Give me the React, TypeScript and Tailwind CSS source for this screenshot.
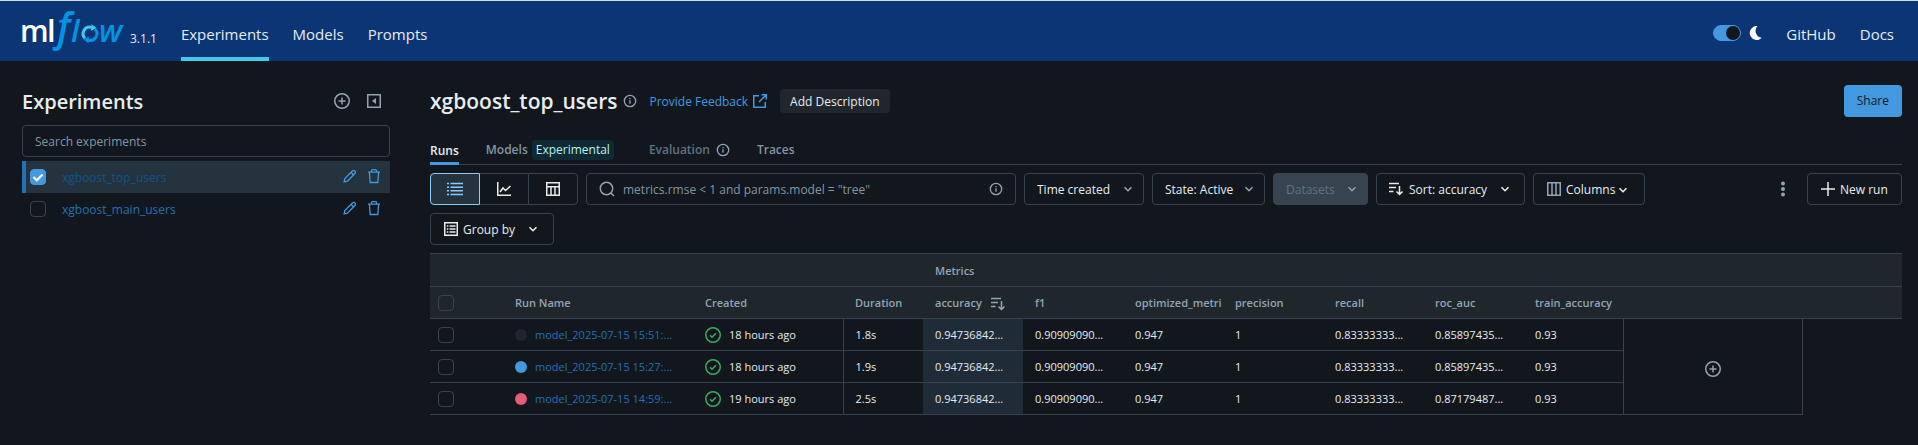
import type { ReactNode } from "react";

type IconProps = { className?: string };

function Logo() {
  return (
    <svg width="106" height="44" viewBox="0 0 106 44" role="img" aria-label="mlflow" className="shrink-0 overflow-visible">
      <g style={{ fontFamily: '"Open Sans", sans-serif' }} fontWeight="600">
        <text x="0" y="33" fontSize="30" fill="#fff">m</text>
        <text x="27" y="33" fontSize="31" fill="#fff">l</text>
        <text x="37" y="32" fontSize="39" fontStyle="italic" fill="#0194e2">f</text>
        <text x="51" y="33" fontSize="31" fontStyle="italic" fill="#0194e2">l</text>
        <text x="79" y="33" fontSize="31" fontStyle="italic" fill="#0194e2">w</text>
      </g>
      <g fill="none" strokeWidth="3">
        <path d="M65 29.200a6.500 6.500 0 0 1 6.500-10.800" stroke="#43c9ed" />
        <path d="M75 20.200a6.500 6.500 0 0 1-6.500 10.800" stroke="#0194e2" />
      </g>
      <path d="M71.500 15.200l5 3.800-5.600 3z" fill="#43c9ed" />
      <path d="M68.500 34.200l-5-3.800 5.600-3z" fill="#0194e2" />
    </svg>
  );
}

function Icon({ size = 16, className = "", children }: { size?: number; className?: string; children: ReactNode }) {
  return (
    <svg
      width={size}
      height={size}
      viewBox="0 0 16 16"
      fill="none"
      stroke="currentColor"
      strokeWidth="1.5"
      aria-hidden="true"
      className={`shrink-0 ${className}`}
    >
      {children}
    </svg>
  );
}

const PlusCircle = () => (
  <Icon>
    <circle cx="8" cy="8" r="7.25" />
    <path d="M8 4.5v7M4.5 8h7" />
  </Icon>
);

const CollapseIcon = () => (
  <Icon>
    <path d="M1.75 1.75h12.5v12.5H1.75z" />
    <path d="M10 5v6L6 8z" fill="currentColor" stroke="none" />
  </Icon>
);

const Pencil = () => (
  <Icon>
    <path d="M2.200 13.800l.6-3.200 7.600-7.600a1.700 1.700 0 0 1 2.500 2.500L5.400 13.100zM9 4.500l2.500 2.500" strokeWidth="1.3" />
  </Icon>
);

const Trash = () => (
  <Icon>
    <path d="M2 4.2h12M5.5 4V2.6c0-.6.4-1 1-1h3c.6 0 1 .4 1 1V4M3.4 4.5l.8 10h7.6l.8-10" strokeWidth="1.3" />
  </Icon>
);

const InfoIcon = () => (
  <Icon size={14}>
    <circle cx="8" cy="8" r="6.5" />
    <path d="M8 7v4.2M8 4.6v1.5" />
  </Icon>
);

const ExternalIcon = () => (
  <Icon>
    <path d="M7 2.75H1.75v11.5h11.5V9M9.5 1.75h4.75V6.5M14 2L7 9" />
  </Icon>
);

const ListIcon = () => (
  <Icon>
    <path d="M0 2.5h2M0 6.2h2M0 9.8h2M0 13.5h2M3.5 2.5H16M3.5 6.2H16M3.5 9.8H16M3.5 13.5H16" />
  </Icon>
);

const ChartIcon = () => (
  <Icon>
    <path d="M1.75 1v13.25H15M4 11l3-4 2.5 2.5L14.5 5" />
  </Icon>
);

const TableIcon = () => (
  <Icon>
    <path d="M1.75 1.75h12.5v12.5H1.75zM1.75 5.75h12.5M6 6v8M10 6v8" />
  </Icon>
);

const SearchIcon = () => (
  <Icon>
    <circle cx="7.5" cy="7.5" r="6.2" />
    <path d="M12 12l3 3" />
  </Icon>
);

const Chevron = ({ className = "" }: IconProps) => (
  <Icon className={className}>
    <path d="M4.5 6.2L8 9.7l3.500-3.500" strokeWidth="1.6" />
  </Icon>
);

const SortIcon = () => (
  <Icon>
    <path d="M1 2.5h10M1 6.500h7M1 10.5h4.500M11.500 5v8.500M8.500 10.500l3 3 3-3" />
  </Icon>
);

const ColumnsIcon = () => (
  <Icon className="text-[#92a4b3]">
    <path d="M1.75 1.75h12.5v12.5H1.75zM6 2v12M10 2v12" />
  </Icon>
);

const GroupIcon = () => (
  <Icon>
    <path d="M1.75 1.75h12.5v12.5H1.75z" />
    <path d="M3.800 5h1.500M3.800 8h1.500M3.800 11h1.500M6.500 5h6M6.500 8h6M6.500 11h6" />
  </Icon>
);

const CheckCircle = () => (
  <Icon className="text-[#3caa60]">
    <circle cx="8" cy="8" r="7.25" />
    <path d="M5 8.300l2 2 4-4" />
  </Icon>
);

function Checkbox({ label, checked = false }: { label: string; checked?: boolean }) {
  return (
    <span className="relative flex size-4 shrink-0">
      <input
        type="checkbox"
        aria-label={label}
        defaultChecked={checked}
        className="peer size-4 appearance-none rounded-[4px] border border-[#37444f] checked:border-[#4299e0] checked:bg-[#4299e0]"
      />
      <svg viewBox="0 0 16 16" aria-hidden="true" className="pointer-events-none absolute inset-0 hidden size-4 peer-checked:block">
        <path d="M3.500 8l3.300 3.300L12.500 5.500" fill="none" stroke="#fff" strokeWidth="2.200" />
      </svg>
    </span>
  );
}

function Experiment({ name, selected = false }: { name: string; selected?: boolean }) {
  return (
    <li
      className={`flex h-8 items-center border-l-4 pr-2 pl-1 ${
        selected ? "border-[#2272b4] bg-[#25333f]" : "border-transparent"
      }`}
    >
      <Checkbox label={name} checked={selected} />
      <a href="#" className={`ml-4 grow pt-0.5 text-xs ${selected ? "text-[#0e538b]" : "text-[#2272b4]"}`}>
        {name}
      </a>
      <span className="flex gap-2 pb-0.5 text-[#4299e0]">
        <button aria-label={`Rename ${name}`}><Pencil /></button>
        <button aria-label={`Delete ${name}`}><Trash /></button>
      </span>
    </li>
  );
}

function Dropdown({
  label,
  value,
  width,
  icon,
  tone = "text-[#e8ecf0]",
  chevron = "right-2 text-[#92a4b3]",
  disabled = false,
}: {
  label: string;
  value: string;
  width: string;
  icon?: ReactNode;
  tone?: string;
  chevron?: string;
  disabled?: boolean;
}) {
  return (
    <div className={`relative flex h-8 items-center ${width}`}>
      {icon && <span className="pointer-events-none absolute left-3">{icon}</span>}
      <select
        aria-label={label}
        disabled={disabled}
        className={`h-8 w-full appearance-none rounded-[4px] border border-[#37444f] pt-0.5 pr-7 text-xs opacity-100 ${
          icon ? "pl-8" : "pl-3"
        } ${disabled ? "bg-[#37444f]" : "bg-transparent"} ${tone}`}
      >
        <option>{value}</option>
      </select>
      <Chevron className={`pointer-events-none absolute ${chevron}`} />
    </div>
  );
}

const outlined = "flex h-8 items-center rounded-[4px] border border-[#37444f] text-xs";

const metrics = ["accuracy", "f1", "optimized_metri", "precision", "recall", "roc_auc", "train_accuracy"];

const runs = [
  {
    name: "model_2025-07-15 15:51:...",
    dot: "bg-[#1f272d]",
    created: "18 hours ago",
    duration: "1.8s",
    values: ["0.94736842...", "0.90909090...", "0.947", "1", "0.83333333...", "0.85897435...", "0.93"],
  },
  {
    name: "model_2025-07-15 15:27:...",
    dot: "bg-[#4299e0]",
    created: "18 hours ago",
    duration: "1.9s",
    values: ["0.94736842...", "0.90909090...", "0.947", "1", "0.83333333...", "0.85897435...", "0.93"],
  },
  {
    name: "model_2025-07-15 14:59:...",
    dot: "bg-[#e65b77]",
    created: "19 hours ago",
    duration: "2.5s",
    values: ["0.94736842...", "0.90909090...", "0.947", "1", "0.83333333...", "0.87179487...", "0.93"],
  },
];

function Header() {
  return (
    <header className="flex h-[61px] items-stretch border-t border-[#d5dde4] bg-[#0b3574] pr-6 pl-5 text-[15px] text-[#e8ecf0]">
      <div className="flex items-start gap-1 pt-2">
        <Logo />
        <span className="pt-5 text-xs leading-5">3.1.1</span>
      </div>
      <nav className="ml-6 flex gap-6">
        <a href="#" className="flex items-center border-b-4 border-[#43c9ed] pt-2.5">Experiments</a>
        <a href="#" className="flex items-center pt-1.5">Models</a>
        <a href="#" className="flex items-center pt-1.5">Prompts</a>
      </nav>
      <div className="ml-auto flex items-center gap-6 pt-1">
        <div className="flex items-center gap-2">
          <button role="switch" aria-checked="true" aria-label="Dark mode" className="flex h-4 w-7 justify-end rounded-full border border-[#4299e0] bg-[#4299e0]">
            <span className="size-[14px] rounded-full bg-[#11171c]" />
          </button>
          <svg width="13" height="14" viewBox="0 0 13 14" aria-hidden="true">
            <path d="M8.500 0A7 7 0 1 0 12.800 11.800 7 7 0 0 1 8.500 0z" fill="#fff" />
          </svg>
        </div>
        <a href="#" className="pt-0.5">GitHub</a>
        <a href="#" className="pt-0.5">Docs</a>
      </div>
    </header>
  );
}

function Sidebar() {
  return (
    <aside className="w-[390px] shrink-0 pt-6 pl-[22px]">
      <div className="flex h-8 items-center pr-2">
        <h2 className="grow pt-0.5 text-xl font-semibold">Experiments</h2>
        <span className="flex gap-4 text-[#92a4b3]">
          <button aria-label="Create experiment"><PlusCircle /></button>
          <button aria-label="Collapse sidebar"><CollapseIcon /></button>
        </span>
      </div>
      <input
        aria-label="Search experiments"
        placeholder="Search experiments"
        className="mt-2 block h-8 w-full rounded-[4px] border border-[#37444f] bg-transparent px-3 text-xs placeholder:text-[#8396a5]"
      />
      <ul className="mt-1">
        <Experiment name="xgboost_top_users" selected />
        <Experiment name="xgboost_main_users" />
      </ul>
    </aside>
  );
}

function Tabs() {
  return (
    <nav className="mt-4 flex h-8 gap-[27px] border-b border-[#37444f] text-xs font-semibold text-[#8396a5]">
      <a href="#" className="-mb-px flex items-center border-b-3 border-[#4299e0] pt-1.5 text-[#e8ecf0]">Runs</a>
      <a href="#" className="flex items-center gap-1 pt-0.5">
        Models
        <span className="mr-2 rounded-[4px] bg-[#102a33] px-1 leading-5 font-normal text-[#b8f1f5]">Experimental</span>
      </a>
      <span className="flex items-center gap-1.5 pt-0.5 text-[#5f7281]">
        Evaluation
        <span className="text-[#92a4b3]"><InfoIcon /></span>
      </span>
      <a href="#" className="flex items-center pt-0.5">Traces</a>
    </nav>
  );
}

function Toolbar() {
  return (
    <div className="mt-2 flex items-start gap-2">
      <div className="flex grow flex-wrap gap-2">
        <div className="flex h-8 w-[148px]">
          <button aria-label="List view" className="flex grow items-center justify-center rounded-l-[4px] border border-[#8acaff] bg-[#25333f] text-[#8acaff]"><ListIcon /></button>
          <button aria-label="Chart view" className="flex grow items-center justify-center border-y border-[#37444f]"><ChartIcon /></button>
          <button aria-label="Table view" className="flex grow items-center justify-center rounded-r-[4px] border border-[#37444f]"><TableIcon /></button>
        </div>
        <label className={`${outlined} w-[430px] gap-2 px-3 text-[#92a4b3]`}>
          <SearchIcon />
          <input
            aria-label="Search runs"
            placeholder={'metrics.rmse < 1 and params.model = "tree"'}
            className="min-w-0 grow bg-transparent pt-0.5 placeholder:text-[#8396a5]"
          />
          <InfoIcon />
        </label>
        <Dropdown label="Time" value="Time created" width="w-[120px]" />
        <Dropdown label="State" value="State: Active" width="w-[113px]" />
        <Dropdown label="Datasets" value="Datasets" width="w-[95px]" tone="text-[#5f7281]" disabled />
        <Dropdown label="Sort" value="Sort: accuracy" width="w-[149px]" chevron="right-3 text-[#e8ecf0]" icon={<SortIcon />} />
        <button className={`${outlined} w-[112px] gap-1 px-3`}>
          <ColumnsIcon />
          <span className="flex items-center pt-0.5">Columns<Chevron /></span>
        </button>
        <button className={`${outlined} w-[124px] gap-1 px-3`}>
          <GroupIcon />
          <span className="pt-0.5">Group by</span>
          <Chevron className="ml-auto" />
        </button>
      </div>
      <button aria-label="More actions" className="flex size-8 shrink-0 items-center justify-center text-[#92a4b3]">
        <Icon>
          <g fill="currentColor" stroke="none">
            <circle cx="8" cy="2.500" r="2" />
            <circle cx="8" cy="8" r="2" />
            <circle cx="8" cy="13.500" r="2" />
          </g>
        </Icon>
      </button>
      <button className={`${outlined} w-[95px] shrink-0 gap-1 px-3 whitespace-nowrap`}>
        <Icon><path d="M8 1v14M1 8h14" /></Icon>
        <span className="pt-0.5">New run</span>
      </button>
    </div>
  );
}

function RunsTable() {
  return (
    <table className="mt-2 w-full table-fixed border-collapse text-left text-[11px]">
      <colgroup>
        <col className="w-[73px]" />
        <col className="w-[190px]" />
        <col className="w-[150px]" />
        <col className="w-[80px]" />
        {metrics.map((m) => (
          <col key={m} className="w-[100px]" />
        ))}
        <col className="w-[179px]" />
        <col />
      </colgroup>
      <thead className="bg-[#1f272d] text-[#92a4b3]">
        <tr className="h-[33px] border-y border-[#37444f]">
          <th colSpan={4} />
          <th colSpan={9} className="p-0 pt-0.5 pl-3 font-semibold">Metrics</th>
        </tr>
        <tr className="h-8 border-b border-[#37444f]">
          <th className="p-0 pl-2"><Checkbox label="Select all runs" /></th>
          <th className="p-0 pt-0.5 pl-3 font-semibold">Run Name</th>
          <th className="p-0 pt-0.5 pl-3 font-semibold">Created</th>
          <th className="p-0 pt-0.5 pl-3 font-semibold">Duration</th>
          {metrics.map((m) => (
            <th key={m} className="p-0 pt-0.5 pl-3 font-semibold">
              <span className="flex items-center gap-2">
                {m}
                {m === "accuracy" && <SortIcon />}
              </span>
            </th>
          ))}
          <th colSpan={2} />
        </tr>
      </thead>
      <tbody>
        {runs.map((run, i) => (
          <tr key={run.name} className="h-8">
            <td className="border-b border-[#37444f] p-0 pl-2"><Checkbox label={`Select ${run.name}`} /></td>
            <td className="border-b border-[#37444f] p-0 pl-3">
              <span className="flex items-center gap-2">
                <span className={`size-3 shrink-0 rounded-full ${run.dot}`} />
                <a href="#" className="pt-0.5 whitespace-nowrap text-[#2272b4]">{run.name}</a>
              </span>
            </td>
            <td className="border-r border-b border-[#37444f] p-0 pl-3">
              <span className="flex items-center gap-2">
                <CheckCircle />
                <span className="pt-0.5">{run.created}</span>
              </span>
            </td>
            <td className="border-b border-[#37444f] p-0 pt-0.5 pl-3">{run.duration}</td>
            {run.values.map((v, j) => (
              <td key={metrics[j]} className={`border-b border-[#37444f] p-0 pt-0.5 pl-3 ${j === 0 ? "bg-[#1f2b36]" : ""}`}>{v}</td>
            ))}
            {i === 0 && (
              <td rowSpan={3} className="border-x border-b border-[#37444f] p-0 pt-1 text-[#92a4b3]">
                <button aria-label="Show more columns" className="mx-auto block"><PlusCircle /></button>
              </td>
            )}
          </tr>
        ))}
      </tbody>
    </table>
  );
}

export default function App() {
  return (
    <div className="min-h-screen bg-[#11171c] font-['Open_Sans',sans-serif] text-[#e8ecf0]">
      <Header />
      <div className="flex">
        <Sidebar />
        <main className="min-w-0 grow pt-6 pr-4 pl-10">
          <div className="flex h-8 items-center">
            <h1 className="pt-0.5 text-[21px] font-semibold">xgboost_top_users</h1>
            <span className="ml-1.5 text-[#92a4b3]"><InfoIcon /></span>
            <a href="#" className="ml-3 flex items-center gap-1 text-xs text-[#4299e0]">
              <span className="pt-0.5">Provide Feedback</span>
              <ExternalIcon />
            </a>
            <button className="ml-3 h-6 rounded-[4px] bg-[#1f272d] px-2.5 pt-px text-xs">Add Description</button>
            <button className="ml-auto h-8 rounded-[4px] bg-[#4299e0] px-[13px] text-xs text-[#11171c]">Share</button>
          </div>
          <Tabs />
          <Toolbar />
          <RunsTable />
        </main>
      </div>
    </div>
  );
}
